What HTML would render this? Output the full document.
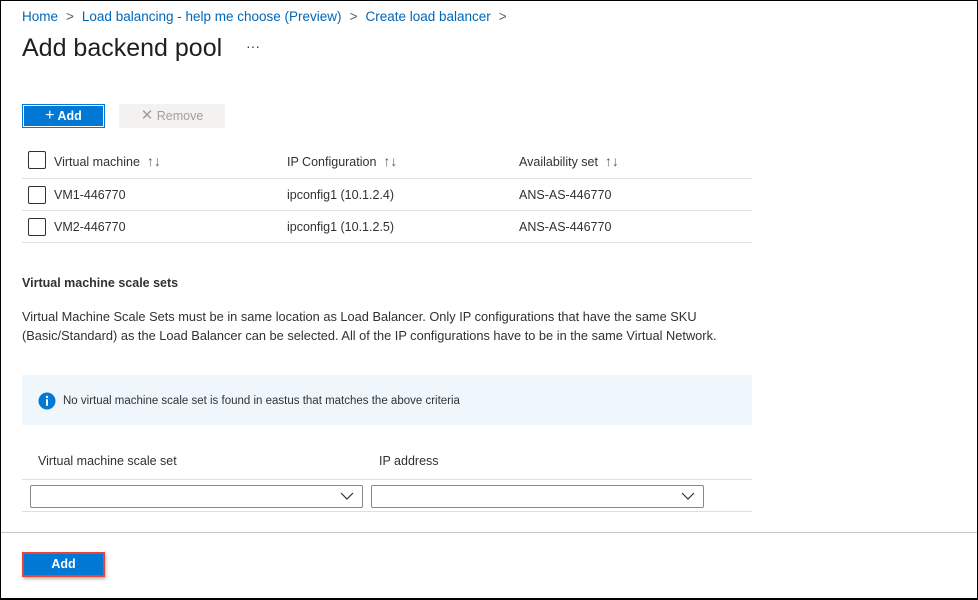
<!DOCTYPE html>
<html><head><meta charset="utf-8"><style>
*{margin:0;padding:0;box-sizing:border-box}
body{width:978px;height:600px;overflow:hidden;background:#fff;font-family:"Liberation Sans",sans-serif;color:#323130;position:relative}
.frame{position:absolute;left:0;top:0;width:978px;height:600px;border:1px solid #000;border-bottom-width:2px}
.a{position:absolute;white-space:nowrap}
.bc{top:9px;left:22px;font-size:13.5px;color:#0067b8}
.bc span{color:#605e5c;margin:0 8px}
.t{top:34px;left:22px;font-size:25px;color:#201f1e}
.btn{position:absolute;font-size:12.5px;font-weight:bold;text-align:center}
.cb{position:absolute;width:18px;height:18px;border:1px solid #323130;border-radius:2px;left:28px}
.ln{position:absolute;height:1px;background:#e1dfdd;left:22px;width:730px}
.f{font-size:12.5px}
.s{font-size:14px;color:#605e5c}
.dd{position:absolute;top:485px;height:23px;border:1px solid #8a8886;border-radius:2px;width:333px}
.dd svg{position:absolute;right:8px;top:6px}
</style></head><body>
<div class="a bc">Home<span>&gt;</span>Load balancing - help me choose (Preview)<span>&gt;</span>Create load balancer<span>&gt;</span></div>
<div class="a t">Add backend pool</div>
<div class="a" style="top:38px;left:246px;font-size:14px">···</div>
<div class="btn" style="left:22px;top:104px;width:83px;height:24px;background:#0078d4;border:1px solid #0078d4;box-shadow:inset 0 0 0 1px #fff;color:#fff;line-height:22px"><span style="font-weight:normal;font-size:16px">+</span> Add</div>
<div class="btn" style="left:119px;top:104px;width:106px;height:24px;background:#f3f2f1;color:#a19f9d;line-height:24px;font-weight:normal"><span style="font-size:15px">✕</span> Remove</div>
<div class="cb" style="top:151px"></div>
<div class="a f" style="top:153px;left:54px">Virtual machine &nbsp;<span class="s">↑↓</span></div>
<div class="a f" style="top:153px;left:287px">IP Configuration &nbsp;<span class="s">↑↓</span></div>
<div class="a f" style="top:153px;left:519px">Availability set &nbsp;<span class="s">↑↓</span></div>
<div class="ln" style="top:178px"></div>
<div class="cb" style="top:186px"></div>
<div class="a f" style="top:188px;left:54px">VM1-446770</div>
<div class="a f" style="top:188px;left:287px">ipconfig1 (10.1.2.4)</div>
<div class="a f" style="top:188px;left:519px">ANS-AS-446770</div>
<div class="ln" style="top:210px"></div>
<div class="cb" style="top:218px"></div>
<div class="a f" style="top:220px;left:54px">VM2-446770</div>
<div class="a f" style="top:220px;left:287px">ipconfig1 (10.1.2.5)</div>
<div class="a f" style="top:220px;left:519px">ANS-AS-446770</div>
<div class="ln" style="top:242px"></div>
<div class="a f" style="top:276px;left:22px;font-weight:bold">Virtual machine scale sets</div>
<div class="a" style="top:307px;left:22px;line-height:19px;font-size:12.8px">Virtual Machine Scale Sets must be in same location as Load Balancer. Only IP configurations that have the same SKU<br>(Basic/Standard) as the Load Balancer can be selected. All of the IP configurations have to be in the same Virtual Network.</div>
<div class="a" style="top:375px;left:22px;width:730px;height:50px;background:#eff6fc"></div>
<svg class="a" style="top:392px;left:38px" width="18" height="18" viewBox="0 0 18 18"><circle cx="9" cy="9" r="8.5" fill="#0078d4"/><circle cx="9" cy="5" r="1.2" fill="#fff"/><rect x="8" y="7.3" width="2" height="6.5" fill="#fff"/></svg>
<div class="a" style="top:395px;left:63px;font-size:11.5px">No virtual machine scale set is found in eastus that matches the above criteria</div>
<div class="a f" style="top:454px;left:38px">Virtual machine scale set</div>
<div class="a f" style="top:454px;left:379px">IP address</div>
<div class="ln" style="top:479px"></div>
<div class="dd" style="left:30px"><svg width="14" height="9" viewBox="0 0 14 9"><path d="M1 1l6 6 6-6" fill="none" stroke="#323130" stroke-width="1.2"/></svg></div>
<div class="dd" style="left:371px"><svg width="14" height="9" viewBox="0 0 14 9"><path d="M1 1l6 6 6-6" fill="none" stroke="#323130" stroke-width="1.2"/></svg></div>
<div class="ln" style="top:511px"></div>
<div class="a" style="top:532px;left:0;width:978px;height:1px;background:#c8c6c4"></div>
<div class="btn" style="left:22px;top:552px;width:83px;height:25px;background:#0078d4;border:2px solid #e8443a;color:#fff;line-height:21px;box-shadow:1px 2px 3px rgba(0,0,0,.3)">Add</div>
<div class="frame"></div>
</body></html>
